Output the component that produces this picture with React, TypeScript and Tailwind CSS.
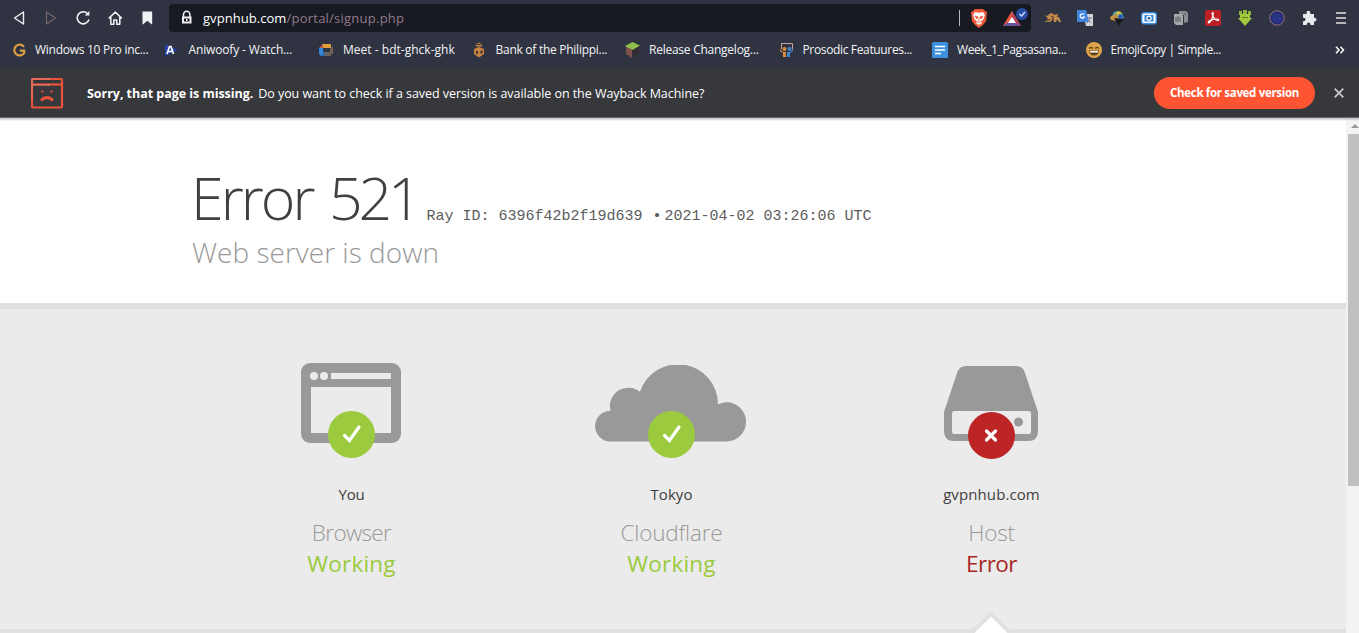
import type { ReactNode } from 'react';

type Bookmark = { label: string; icon: ReactNode; textClass: string };

const bookmarks: Bookmark[] = [
  {
    label: 'Windows 10 Pro inc...',
    textClass: 'tracking-[-0.27px]',
    icon: (
      <path d="M13 4.800A5.400 5.400 0 1 0 13.200 11V8.600H8.800" fill="none" stroke="#dc9d42" strokeWidth="2.200" />
    ),
  },
  {
    label: 'Aniwoofy - Watch...',
    textClass: 'tracking-[-0.15px]',
    icon: (
      <>
        <path d="M0 2l13 6-13 6z" fill="#2444a8" />
        <path d="M2 12l2.500-7.500h1.500L8.500 12M3.500 9.500h4" fill="none" stroke="#fff" strokeWidth="1.700" />
      </>
    ),
  },
  {
    label: 'Meet - bdt-ghck-ghk',
    textClass: 'tracking-[0.02px] pl-px',
    icon: (
      <>
        <path d="M4 2h9v4H4z" fill="#dda23b" />
        <path d="M1 6h4v4h4v4H3l-2-2z" fill="#3286dd" />
        <path d="M5 2v4H1z" fill="#c4564a" />
        <path d="M5 10h8v4H5zM12 7l3-3v9l-3-3z" fill="#6f6450" />
        <path d="M5 10h2v4H4zM9 11h1v2H9z" fill="#3c6c9f" />
      </>
    ),
  },
  {
    label: 'Bank of the Philippi...',
    textClass: 'tracking-[-0.27px]',
    icon: (
      <>
        <path d="M4 2.500l3-2 3 2v2H4zM2 7l5-2 5 2v5l-5 3.500L2 12z" fill="#c98341" />
        <path d="M4 8.500l2 1v3l-2-1zM8.500 9l2-1v3l-2 1zM5 2h4v1H5z" fill="#3d3034" />
      </>
    ),
  },
  {
    label: 'Release Changelog...',
    textClass: 'tracking-[-0.25px]',
    icon: (
      <>
        <path d="M1 4v8l6 4V8z" fill="#80504c" />
        <path d="M14 4v8l-7 4V8z" fill="#332e36" />
        <path d="M7.500 0L15 3.500 7.500 8 0 4z" fill="#8fc04b" />
      </>
    ),
  },
  {
    label: 'Prosodic Featuures...',
    textClass: 'tracking-[-0.35px]',
    icon: (
      <>
        <path d="M2.500 7V1.500h11V7" fill="none" stroke="#c6a5a0" />
        <circle cx="5.500" cy="7" r="2" fill="#d98a3b" />
        <circle cx="10.500" cy="7" r="2" fill="#4388cd" />
        <path d="M1 7l3 3h3v5H4v-4L1 9z" fill="#d98a3b" />
        <path d="M14 7l-3 3H8v5h3v-4l3-2z" fill="#4388cd" />
      </>
    ),
  },
  {
    label: 'Week_1_Pagsasana...',
    textClass: 'tracking-[-0.4px] pl-px',
    icon: (
      <>
        <rect width="16" height="16" rx="1.500" fill="#3e91df" />
        <path d="M3 4.500h10M3 8h10M3 11.500h6" stroke="#fff" strokeWidth="1.600" />
      </>
    ),
  },
  {
    label: 'EmojiCopy | Simple...',
    textClass: 'tracking-[-0.42px] pl-px',
    icon: (
      <>
        <circle cx="8" cy="8" r="8" fill="#dda448" />
        <path d="M3 6.500q2-2 4 0M9 6.500q2-2 4 0" fill="none" stroke="#65431f" strokeWidth="1.200" />
        <path d="M3 8.500h10q-.5 5-5 5t-5-5z" fill="#65431f" />
        <path d="M4 9h8v1.500H4z" fill="#fff" />
      </>
    ),
  },
];

const extensions: ReactNode[] = [
  <>
    <path d="M0 5l3 1 1-2 3-1 2 2 3-1 2 3 2 5h-2l-2-3-1 3H9l-1-3-3 3H0l3-3z" fill="#c58b48" />
    <path d="M6 6l2 1v3M2 11l3-2M12 6l2 1" fill="none" stroke="#4f3c38" strokeWidth="1.200" />
  </>,
  <>
    <path d="M6 4h10v12H9z" fill="#d3d5d9" />
    <path d="M0 0h9l3 12H1q-1 0-1-1z" fill="#4086df" />
    <path d="M7 4.500a2.200 2.200 0 1 0 .3 2.500H5.500" fill="none" stroke="#fff" strokeWidth="1.200" />
    <path d="M10 8h5M12.500 7v2q-1 3-3 4M11 10l3 3" fill="none" stroke="#777f90" />
  </>,
  <>
    <path d="M4 3q4-4 9 0l2 5-6 3-6-2z" fill="#3b9cae" />
    <path d="M6 3l4-2 3 2-4 3z" fill="#ddb93f" />
    <path d="M1 7l5-3 5 4-3 3-6-1z" fill="#c49342" />
    <path d="M5 8l10 1-3 3-2 4-3-5z" fill="#15191d" />
    <path d="M10 4l4 2-1 3-4-1z" fill="#3158b4" />
  </>,
  <>
    <rect x=".7" y="2.700" width="14.600" height="11" rx="2.200" fill="#fff" stroke="#3c8ee0" strokeWidth="1.400" />
    <rect x="3.500" y="5" width="9" height="6.500" fill="#3684d8" />
    <circle cx="8" cy="8.200" r="2.700" fill="#fff" />
    <circle cx="8" cy="8.200" r="1.300" fill="#1d5594" />
  </>,
  <>
    <path d="M6 1h7l2 2v9l-4 1V5H6z" fill="#8a8c91" />
    <path d="M1 4h8l1 2v9H3l-2-2z" fill="#a8a9aa" />
    <path d="M3 7v5M5 6v6M7 7v5M11 3l2 2" stroke="#55575d" />
  </>,
  <>
    <rect width="16" height="16" rx="2" fill="#bf1e24" />
    <path d="M7.800 2.500c-1 0-.7 2 .3 4 1 2 3 4 4.700 4 1.400 0 1.200-1.500-.8-1.500-3 0-8 1.500-8.700 3-.4 1 .8 1.500 2-.3C7.500 9 9 2.500 7.800 2.500z" fill="none" stroke="#fff" strokeWidth="1.200" />
  </>,
  <>
    <path d="M2 1h3v3h1V0h4v4h1V1h3v4H2z" fill="#8eb43b" />
    <path d="M3 4h10v4h2l-7 8-7-8h2z" fill="#a3ca3d" />
    <path d="M5 7.500h6" fill="none" stroke="#63792b" />
  </>,
  <>
    <circle cx="8" cy="8" r="7.200" fill="#242a70" stroke="#99717f" strokeWidth="1" />
    <circle cx="8" cy="8" r="5" fill="#283584" />
  </>,
  <path d="M2 4h3.500V2.700a1.900 1.900 0 0 1 3.800 0V4H13v3.700h.6a1.900 1.900 0 0 1 0 3.800H13V15H9.400v-.8a1.800 1.800 0 0 0-3.600 0v.8H2v-3.800h.8a1.700 1.700 0 0 0 0-3.400H2z" fill="#e8e9ed" />,
];

const Icon16 = ({ children }: { children: ReactNode }) => (
  <svg viewBox="0 0 16 16" className="block size-4 shrink-0">
    {children}
  </svg>
);

const Toolbar = () => (
  <div className="flex h-9 items-center bg-[#303442] pl-3 text-white">
    <div className="flex w-[157px] items-center gap-4">
      <Icon16>
        <path d="M11.500 2v12L2.500 8z" fill="none" stroke="#f0f1f4" strokeWidth="1.400" strokeLinejoin="round" />
      </Icon16>
      <Icon16>
        <path d="M2.500 2v12l9-6z" fill="none" stroke="#75666b" strokeWidth="1.200" strokeLinejoin="round" />
      </Icon16>
      <Icon16>
        <path d="M11.600 3.700A6 6 0 1 0 13 9.500" fill="none" stroke="#f0f1f4" strokeWidth="1.600" />
        <path d="M8.800 5.500h4.600V1z" fill="#f0f1f4" />
      </Icon16>
      <Icon16>
        <path d="M.8 8.400L7.300 2l6.500 6.400M2.800 7v7.200h3V10h3v4.200h3V7" fill="none" stroke="#f0f1f4" strokeWidth="1.500" strokeLinejoin="round" />
      </Icon16>
      <Icon16>
        <path d="M2.500 1.500h9.700v13.300l-4.900-4-4.800 4z" fill="#f0f1f4" />
      </Icon16>
    </div>
    <div className="flex h-7 w-[862px] items-center rounded bg-[#181a21] pl-[11px]">
      <Icon16>
        <path d="M3.500 7V4.500a3.200 3.200 0 0 1 6.400 0V7" fill="none" stroke="#f0f1f4" strokeWidth="1.500" />
        <path d="M2 6.500h9.500v7H2zM4 8.500v3h5.500v-3z" fill="#f0f1f4" fillRule="evenodd" />
        <path d="M6 9h1.500v2H6z" fill="#f0f1f4" />
      </Icon16>
      <span className="ml-[7px] flex-1 pt-0.5 text-[13px] whitespace-nowrap tracking-[0.05px]">
        gvpnhub.com<span className="tracking-[0.24px] text-[#94788d]">/portal/signup.php</span>
      </span>
      <span className="h-4 w-px bg-[#b7b7bc]" />
      <svg viewBox="0 0 18 20" className="ml-2.5 h-5 w-[18px]">
        <path d="M5 1h8l2 2 2 1-1 9-3 4-4 3-4-3-3-4-1-9 2-1z" fill="#f05a38" />
        <path d="M5 4l4 .8L13 4l2 3-2 5-2 1 1 2-3 2-3-2 1-2-2-1-2-5z" fill="#fff" />
        <path d="M5 8l3 1-1 2zM13 8l-3 1 1 2zM9 9v4M7 14h4" fill="#f05a38" stroke="#f05a38" strokeWidth=".8" />
      </svg>
      <svg viewBox="0 0 27 20" className="mr-0.5 ml-3.5 h-5 w-[27px]">
        <path d="M10 3L1 18h18z" fill="#6854a2" />
        <path d="M10 3v8l-5 4-4 3z" fill="#f05438" />
        <path d="M10 3l9 15-6-3-3-5z" fill="#b34160" />
        <path d="M10 9l-4 6h8z" fill="#fff" />
        <circle cx="20" cy="6" r="5.900" fill="#294da5" />
        <path d="M17.500 6l2 2 3.500-4" fill="none" stroke="#dce5ff" strokeWidth="1.200" />
      </svg>
    </div>
    <div className="ml-3.5 flex gap-4">
      {extensions.map((icon, i) => (
        <Icon16 key={i}>{icon}</Icon16>
      ))}
    </div>
    <svg viewBox="0 0 10 14" className="ml-[19px] h-3.5 w-2.5">
      <path d="M0 2h10M0 7h10M0 12h10" stroke="#e6e1e1" strokeWidth="1.500" />
    </svg>
  </div>
);

const BookmarksBar = () => (
  <div className="flex h-[31px] items-start bg-[#303442] pl-[11px] text-[#f3f3f5]">
    {bookmarks.map(({ label, icon, textClass }) => (
      <div key={label} className="flex h-7 w-[153.500px] shrink-0 items-center gap-2">
        <Icon16>{icon}</Icon16>
        <span className={`text-[12px] whitespace-nowrap ${textClass}`}>{label}</span>
      </div>
    ))}
    <svg viewBox="0 0 10 8" className="mt-2.5 mr-[14px] ml-auto h-2 w-2.5">
      <path d="M1 .8L4 4 1 7.200M5.500.8l3 3.200-3 3.200" fill="none" stroke="#fff" strokeWidth="1.500" />
    </svg>
  </div>
);

const MissingPageBanner = () => (
  <div className="flex h-[51px] items-center border-b border-[#6b6b6d] bg-[#37383b] pt-0.5 text-white">
    <svg viewBox="0 0 33 31" className="ml-[31px] h-[31px] w-[33px]" fill="none" stroke="#ec5239">
      <rect x="1" y="1" width="30" height="28.500" rx="1" strokeWidth="2.200" />
      <path d="M1 6.500h30" strokeWidth="2.200" />
      <path d="M1 20V1h18M2 7h17" stroke="#d4a5a4" strokeWidth="1" strokeDasharray="1.500 1" />
      <path d="M10 22.500q6-6 12 0" strokeWidth="2.800" />
      <path d="M10.500 13.500h2M19.500 13.500h2" strokeWidth="2" />
    </svg>
    <span className="ml-[23px] pt-0.5 text-[12.500px] font-bold whitespace-nowrap tracking-[-0.04px]">
      Sorry, that page is missing.
    </span>
    <span className="ml-[5px] pt-0.5 text-[12.500px] whitespace-nowrap tracking-[-0.05px]">
      Do you want to check if a saved version is available on the Wayback Machine?
    </span>
    <button className="ml-auto h-8 w-[161px] rounded-full bg-[#ff5431] text-[11.500px] font-bold whitespace-nowrap tracking-[-0.32px]">
      Check for saved version
    </button>
    <svg viewBox="0 0 10 10" className="mr-[15px] ml-[19px] size-2.5">
      <path d="M.7.7l8.600 8.600M9.300.7L.7 9.300" stroke="#cbcbce" strokeWidth="1.700" />
    </svg>
  </div>
);

const BrowserIcon = () => (
  <svg viewBox="0 0 100 80" className="h-20 w-[100px]">
    <rect width="100" height="80" rx="9" fill="#999" />
    <path d="M10 24h80v46H10zM30 10h60v6H30z" fill="#ebebeb" />
    <circle cx="13" cy="13" r="4" fill="#ebebeb" />
    <circle cx="23" cy="13" r="4" fill="#ebebeb" />
  </svg>
);

const CloudIcon = () => (
  <svg viewBox="0 0 151 77" className="h-[77px] w-[151px]">
    <path
      d="M15.500 76.500a15.400 15.400 0 0 1 0-30.800A18.500 18.500 0 0 1 45 26.700a40 40 0 0 1 78 12.500A19.500 19.500 0 0 1 151 57a19.500 19.500 0 0 1-19.500 19.500z"
      fill="#999"
    />
  </svg>
);

const ServerIcon = () => (
  <svg viewBox="0 0 94 75" className="h-[75px] w-[94px]">
    <path d="M22 0h50q7 0 9 7l12 36q1 2 1 4v18q0 10-10 10H10Q0 75 0 65V47q0-2 1-4L13 7q2-7 9-7z" fill="#999" />
    <rect x="8" y="45" width="79" height="23" rx="2.500" fill="#ebebeb" />
    <circle cx="74.500" cy="56" r="4.500" fill="#999" />
  </svg>
);

type StatusProps = {
  icon: ReactNode;
  iconClass: string;
  name: string;
  nameClass: string;
  kind: string;
  kindClass: string;
  ok: boolean;
};

const Status = ({ icon, iconClass, name, nameClass, kind, kindClass, ok }: StatusProps) => (
  <div className="flex w-80 flex-col items-center pt-[54px]">
    <div className="relative flex h-[96px] w-full justify-center">
      <div className={iconClass}>{icon}</div>
      <svg viewBox="0 0 47 47" className={`absolute left-[136.500px] size-[47px] ${ok ? 'top-12' : 'top-[49px]'}`}>
        <circle cx="23.500" cy="23.500" r="23.500" fill={ok ? '#9bca3e' : '#bd2426'} />
        {ok ? (
          <path d="M16.500 24.500l5 5L31 16" fill="none" stroke="#fff" strokeWidth="3.200" strokeLinecap="round" />
        ) : (
          <path d="M18.500 19l9 9M27.500 19l-9 9" stroke="#fff" strokeWidth="3.200" strokeLinecap="round" />
        )}
      </svg>
    </div>
    <span className={`mt-[23px] text-[15px] leading-6 text-[#404040] ${nameClass}`}>{name}</span>
    <span className={`mt-[11px] text-[22.500px] leading-[31px] font-light text-[#999] ${kindClass}`}>{kind}</span>
    <span
      className={`text-[22.500px] leading-[31px] font-normal ${ok ? 'text-[#9bca3e] tracking-[0.2px]' : 'text-[#a82623] tracking-[-0.5px]'}`}
    >
      {ok ? 'Working' : 'Error'}
    </span>
  </div>
);

const ErrorPage = () => (
  <main className="flex-1 overflow-hidden bg-white">
    <header className="h-[185px] pt-[43px] pl-[191px]">
      <div className="flex h-[73px] items-baseline whitespace-nowrap">
        <h1 className="text-[59px] leading-[72px] font-light tracking-[-2.9px] text-[#404040]">
          Error<span className="ml-1"> </span>
          <span className="tracking-[-4.2px]">521</span>
        </h1>
        <span className="ml-[9px] font-['Liberation_Mono',monospace] text-[15px] leading-none text-[#5c5c5c]">
          Ray ID: 6396f42b2f19d639
        </span>
        <span className="ml-2.5 font-['Liberation_Mono',monospace] text-[15px] leading-none text-[#5c5c5c]">•</span>
        <span className="ml-[3px] font-['Liberation_Mono',monospace] text-[15px] leading-none text-[#5c5c5c]">
          2021-04-02 03:26:06 UTC
        </span>
      </div>
      <h2 className="ml-px text-[28px] leading-9 font-light tracking-[0.03px] whitespace-nowrap text-[#999]">
        Web server is down
      </h2>
    </header>
    <section className="h-[332px] border-t-[6px] border-[#e1e1e1] bg-[#ebebeb]">
      <div className="relative flex h-80 pl-[191.500px]">
        <Status icon={<BrowserIcon />} iconClass="relative -left-[0.500px]" name="You" nameClass="tracking-[-0.2px]" kind="Browser" kindClass="tracking-[-0.65px]" ok />
        <Status icon={<CloudIcon />} iconClass="relative -left-px top-[2px]" name="Tokyo" nameClass="tracking-[0.1px]" kind="Cloudflare" kindClass="tracking-[-0.2px]" ok />
        <Status icon={<ServerIcon />} iconClass="relative -left-[0.500px] top-[3px]" name="gvpnhub.com" nameClass="tracking-[0.1px]" kind="Host" kindClass="tracking-[-0.2px]" ok={false} />
        <svg viewBox="0 0 44 22" className="absolute top-[302px] left-[969px] h-[22px] w-11">
          <path d="M0 22L22 0l22 22z" fill="#e1e1e1" />
          <path d="M5.500 22L22 5.500 38.500 22z" fill="#fff" />
        </svg>
      </div>
      <div className="h-1.5 bg-[#e1e1e1]" />
    </section>
  </main>
);

const Scrollbar = () => (
  <div className="flex w-[13px] flex-col items-end bg-[#f3f3f3]">
    <div className="flex h-4 w-full items-center justify-center">
      <svg viewBox="0 0 8 4" className="ml-1 h-1 w-2">
        <path d="M0 4l4-4 4 4z" fill="#999" />
      </svg>
    </div>
    <div className="h-[352px] w-[11px] bg-[#c1c0c1]" />
  </div>
);

export default function App() {
  return (
    <div className="flex h-[633px] w-[1359px] flex-col overflow-hidden font-['Open_Sans','Noto_Sans',sans-serif]">
      <Toolbar />
      <BookmarksBar />
      <MissingPageBanner />
      <div className="relative flex min-h-0 flex-1">
        <ErrorPage />
        <Scrollbar />
        <div className="absolute inset-x-0 top-0 h-[3px] bg-linear-to-b from-[#bbb] to-transparent" />
      </div>
    </div>
  );
}
